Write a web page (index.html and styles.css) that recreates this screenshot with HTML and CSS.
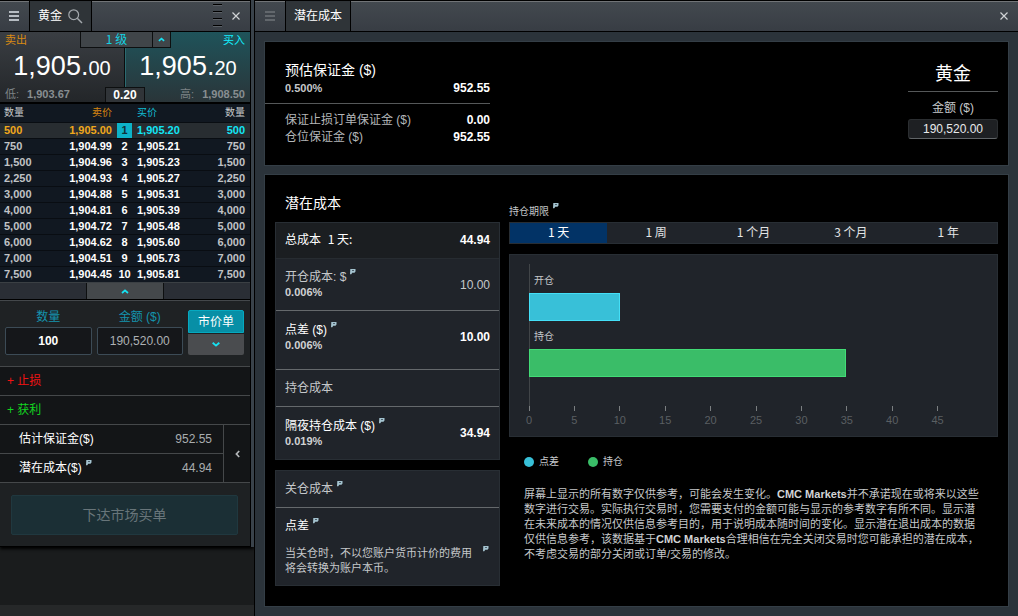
FILE: index.html
```
<!DOCTYPE html>
<html lang="zh-CN">
<head>
<meta charset="utf-8">
<meta name="viewport" content="width=device-width, initial-scale=1">
<title>黄金 - 潜在成本</title>
<link rel="stylesheet" href="styles.css">
</head>
<body>
<svg class="defs" aria-hidden="true">
  <symbol id="menu" viewBox="0 0 10 10"><path d="M0 1h10M0 5h10M0 9h10" stroke="currentColor" stroke-width="2"/></symbol>
  <symbol id="close" viewBox="0 0 8 8"><path d="M.5 .5l7 7M7.500 .5l-7 7" stroke="currentColor" stroke-width="1.200"/></symbol>
  <symbol id="search" viewBox="0 0 15 15"><g fill="none" stroke="currentColor"><circle cx="5.700" cy="5.700" r="4.900" stroke-width="1.200"/><path d="M9.300 9.300l4.700 4.700" stroke-width="1.500"/></g></symbol>
  <symbol id="up" viewBox="0 0 8 5"><path d="M1 4l3-2.600L7 4" fill="none" stroke="currentColor" stroke-width="1.800"/></symbol>
  <symbol id="down" viewBox="0 0 8 5"><path d="M.7 .8l3.300 2.800L7.300 .8" fill="none" stroke="currentColor" stroke-width="1.900"/></symbol>
  <symbol id="left" viewBox="0 0 5 8"><path d="M4.200 1L1.400 4l2.800 3" fill="none" stroke="currentColor" stroke-width="1.700"/></symbol>
  <symbol id="tip" viewBox="0 0 6 6"><path d="M.3 0H5.500V2.600L4.500 3.800H2.200L1.300 5.300H0Z" fill="currentColor"/><path d="M2 1.500h2" stroke="#2a3540" stroke-width=".7"/></symbol>
</svg>
<div class="app">
  <aside class="side">
    <section class="ticket">
      <header class="bar">
        <button class="menu menu-on" aria-label="菜单"><svg><use href="#menu"/></svg></button>
        <button class="tab">黄金<svg class="search"><use href="#search"/></svg></button>
        <span class="grip"><i></i><i></i><i></i><i></i></span>
        <button class="close" aria-label="关闭"><svg><use href="#close"/></svg></button>
      </header>

      <div class="prices">
        <button class="price sell">
          <span class="side-name">卖出</span>
          <span class="quote">1,905.<small>00</small></span>
          <span class="range">低:<b>1,903.67</b></span>
        </button>
        <button class="price buy">
          <span class="side-name">买入</span>
          <span class="quote">1,905.<small>20</small></span>
          <span class="range">高:<b>1,908.50</b></span>
        </button>
        <button class="level"><span>1 级</span><svg class="chev"><use href="#up"/></svg></button>
        <span class="spread">0.20</span>
      </div>

      <table class="ladder">
        <colgroup><col class="c-vol"><col class="c-sell"><col class="c-idx"><col class="c-buy"><col></colgroup>
        <thead><tr><th>数量</th><th class="orange">卖价</th><th></th><th class="cyan">买价</th><th>数量</th></tr></thead>
        <tbody>
          <tr class="top"><td>500</td><td>1,905.00</td><td>1</td><td>1,905.20</td><td>500</td></tr>
          <tr><td>750</td><td>1,904.99</td><td>2</td><td>1,905.21</td><td>750</td></tr>
          <tr><td>1,500</td><td>1,904.96</td><td>3</td><td>1,905.23</td><td>1,500</td></tr>
          <tr><td>2,250</td><td>1,904.93</td><td>4</td><td>1,905.27</td><td>2,250</td></tr>
          <tr><td>3,000</td><td>1,904.88</td><td>5</td><td>1,905.31</td><td>3,000</td></tr>
          <tr><td>4,000</td><td>1,904.81</td><td>6</td><td>1,905.39</td><td>4,000</td></tr>
          <tr><td>5,000</td><td>1,904.72</td><td>7</td><td>1,905.48</td><td>5,000</td></tr>
          <tr><td>6,000</td><td>1,904.62</td><td>8</td><td>1,905.60</td><td>6,000</td></tr>
          <tr><td>7,000</td><td>1,904.51</td><td>9</td><td>1,905.73</td><td>7,000</td></tr>
          <tr><td>7,500</td><td>1,904.45</td><td>10</td><td>1,905.81</td><td>7,500</td></tr>
        </tbody>
      </table>
      <div class="fold"><button aria-label="收起"><svg class="chev"><use href="#up"/></svg></button></div>

      <form class="order">
        <div class="field"><label for="qty">数量</label><input id="qty" class="strong" value="100"></div>
        <div class="field"><label for="amt">金额 ($)</label><input id="amt" value="190,520.00"></div>
        <div class="kind">
          <button type="button" class="market">市价单</button>
          <button type="button" class="more" aria-label="订单类型"><svg class="chev"><use href="#down"/></svg></button>
        </div>
      </form>

      <button class="add stop">+ 止损</button>
      <button class="add profit">+ 获利</button>

      <div class="summary">
        <dl>
          <div><dt>估计保证金($)</dt><dd>952.55</dd></div>
          <div><dt>潜在成本($)<svg class="tip"><use href="#tip"/></svg></dt><dd>44.94</dd></div>
        </dl>
        <button aria-label="展开"><svg><use href="#left"/></svg></button>
      </div>
      <div class="submit"><button>下达市场买单</button></div>
    </section>
    <div class="foot"></div>
  </aside>

  <main class="cost">
    <header class="bar">
      <button class="menu" aria-label="菜单"><svg><use href="#menu"/></svg></button>
      <button class="tab">潜在成本</button>
      <button class="close" aria-label="关闭"><svg><use href="#close"/></svg></button>
    </header>
    <div class="cards">
      <section class="card margin">
        <div class="estimate">
          <div class="est-head">
            <h2>预估保证金 ($)</h2>
            <p><span>0.500%</span><b>952.55</b></p>
          </div>
          <div class="est-rows">
            <p><span>保证止损订单保证金 ($)</span><b>0.00</b></p>
            <p><span>仓位保证金 ($)</span><b>952.55</b></p>
          </div>
        </div>
        <div class="product">
          <h1>黄金</h1>
          <label for="value">金额 ($)</label>
          <input id="value" value="190,520.00">
        </div>
      </section>

      <section class="card detail">
        <div class="breakdown">
          <h2>潜在成本</h2>
          <div class="box">
            <div class="line total"><span class="white">总成本&nbsp; <span class="cjk">1 天:</span></span><b>44.94</b></div>
            <div class="line pair"><div>开仓成本: $<svg class="tip"><use href="#tip"/></svg><small>0.006%</small></div><span>10.00</span></div>
            <div class="line pair tall"><div><span class="white">点差 ($)</span><svg class="tip"><use href="#tip"/></svg><small>0.006%</small></div><b>10.00</b></div>
            <div class="line">持仓成本</div>
            <div class="line pair"><div><span class="white">隔夜持仓成本 ($)</span><svg class="tip"><use href="#tip"/></svg><small>0.019%</small></div><b>34.94</b></div>
          </div>
          <div class="box">
            <div class="line"><span>关仓成本<svg class="tip"><use href="#tip"/></svg></span></div>
            <div class="exit">
              <p class="white">点差<svg class="tip"><use href="#tip"/></svg></p>
              <div class="note"><p>当关仓时，不以您账户货币计价的费用将会转换为账户本币。</p><svg class="tip"><use href="#tip"/></svg></div>
            </div>
          </div>
        </div>

        <div class="period">
          <p class="period-name">持仓期限<svg class="tip"><use href="#tip"/></svg></p>
          <div class="tabs">
            <button class="on">1 天</button><button>1 周</button><button>1 个月</button><button>3 个月</button><button>1 年</button>
          </div>
          <div class="chart">
            <div class="plot">
              <span>开仓</span>
              <div class="value blue" style="width:20%"></div>
              <span>持仓</span>
              <div class="value green" style="width:69.88%"></div>
            </div>
            <div class="axis"><span>0</span><span>5</span><span>10</span><span>15</span><span>20</span><span>25</span><span>30</span><span>35</span><span>40</span><span>45</span></div>
          </div>
          <div class="legend"><span><i class="dot-blue"></i>点差</span><span><i class="dot-green"></i>持仓</span></div>
          <p class="disclaimer">屏幕上显示的所有数字仅供参考，可能会发生变化。<b>CMC Markets</b>并不承诺现在或将来以这些数字进行交易。实际执行交易时，您需要支付的金额可能与显示的参考数字有所不同。显示潜在未来成本的情况仅供信息参考目的，用于说明成本随时间的变化。显示潜在退出成本的数据仅供信息参考，该数据基于<b>CMC Markets</b>合理相信在完全关闭交易时您可能承担的潜在成本，不考虑交易的部分关闭或订单/交易的修改。</p>
        </div>
      </section>
    </div>
  </main>
</div>
</body>
</html>
```
FILE: styles.css
```
* { box-sizing: border-box; }
body {
  margin: 0;
  background: #000;
  color: #c5c8ca;
  font: 12px/16px "Liberation Sans", "Noto Sans CJK SC", sans-serif;
}
h1, h2, p, dl, dd { margin: 0; font-weight: normal; }
button, input { margin: 0; padding: 0; border: 0; background: none; color: inherit; font: inherit; }
button { cursor: pointer; }
svg { display: block; }
b { color: #fff; }
.defs { position: absolute; width: 0; height: 0; }
.cjk { font-family: "Noto Sans CJK SC", sans-serif; }
.white { color: #fff; }
.orange { color: #d68510; }
.cyan { color: #12bcd2; }
.tip { display: inline-block; width: 6px; height: 6px; margin-left: 4px; vertical-align: 6px; color: #a4c3cf; }
.chev { width: 8px; height: 5px; color: #16e3f3; }

.app { display: flex; min-height: 100vh; }
.side { display: flex; flex-direction: column; flex: none; width: 254px; background: #1a1c1d; }
.foot { height: 11px; margin-top: auto; background: #262829; }
.ticket { border-right: 3px solid #3a434b; background: #15171a; box-shadow: inset -1px 0 #000, 0 2px 3px #000; padding-right: 1px; }

/* Window title bars */
.bar {
  display: flex;
  align-items: stretch;
  height: 32px;
  border-top: 1px solid #000;
  border-bottom: 1px solid #000;
  background: linear-gradient(#43494f, #383d44);
  box-shadow: inset 0 1px #717477;
}
.menu { display: grid; place-items: center; width: 30px; padding-right: 2px; border-right: 1px solid #000; color: #62676c; }
.menu svg { width: 10px; height: 10px; }
.menu-on { color: #b6bcc2; }
.tab { display: flex; align-items: center; gap: 6px; padding: 0 8px; border-right: 1px solid #000; background: #2f3438; color: #fff; }
.search { width: 15px; height: 15px; color: #a3a8ac; }
.close { display: grid; place-items: center; width: 28px; margin-left: auto; color: #d0d3d5; }
.close svg { width: 8px; height: 8px; }
.grip { display: flex; flex-direction: column; gap: 6px; width: 9px; margin-left: auto; padding-top: 3px; }
.grip i { height: 1px; background: #000; box-shadow: 0 1px #5b6066; }
.grip + .close { margin-left: 0; }

/* Quotes */
.prices { position: relative; display: grid; grid-template-columns: 1fr 1fr; height: 72px; border-bottom: 2px solid #000; }
.price { display: flex; flex-direction: column; padding: 0 5px; text-align: left; }
.sell { border-right: 1px solid #0a0c0d; background: linear-gradient(#3a3e43, #232629); }
.buy { border-left: 1px solid #2c6a70; background: linear-gradient(#1f535a, #2a3539); text-align: right; }
.side-name { font-size: 11px; color: #d98a12; }
.buy .side-name { color: #12efff; }
.quote { margin: 2px 0; color: #fff; font-size: 27px; line-height: 32px; text-align: center; }
.quote small { font-size: 20px; }
.range { color: #7d8386; font-size: 11px; }
.range b { margin-left: 8px; color: #888e91; }
.level {
  position: absolute; top: 0; left: 80px;
  display: flex; width: 91px; height: 16px;
  border: 1px solid #0d0f10; border-top: 0; background: #404549; color: #12d2e2;
  font: 12px/14px "Noto Sans CJK SC", sans-serif;
}
.level span { flex: 1; }
.level .chev { width: 18px; height: 15px; padding: 5px; border-left: 1px solid #0d0f10; }
.spread {
  position: absolute; bottom: 0; left: 105px;
  width: 40px; height: 15px; border: 1px solid #0d0f10; border-bottom: 0; background: #303438;
  color: #fff; font-weight: bold; line-height: 15px; text-align: center;
}

/* Price ladder */
.ladder { width: 100%; table-layout: fixed; border-spacing: 0; background: #111821; font-size: 11px; }
.c-vol { width: 50px; }
.c-sell { width: 67px; }
.c-idx { width: 15px; }
.c-buy { width: 64px; }
.ladder th { height: 18px; padding: 0; font-size: 10px; font-weight: normal; }
.ladder td { height: 16px; padding: 0; border-top: 1px solid #090d12; line-height: 15px; color: #fff; font-weight: bold; }
.ladder tr > :nth-child(1) { padding-left: 4px; text-align: left; }
.ladder tr > :nth-child(2) { padding-right: 5px; text-align: right; }
.ladder tr > :nth-child(3) { text-align: center; }
.ladder tr > :nth-child(4) { padding-left: 5px; text-align: left; }
.ladder tr > :nth-child(5) { padding-right: 5px; text-align: right; }
.ladder td:first-child, .ladder td:last-child { color: #c0c3c6; }
.ladder .top td { background: #282d31; color: #12e6f6; }
.ladder .top td:nth-child(-n+2) { color: #f0a81c; }
.ladder .top td:nth-child(3) { background: #0db2c8; color: #103038; }
.fold { display: flex; justify-content: center; height: 18px; border-top: 1px solid #3b4044; border-bottom: 1px solid #000; background: #2a2e35; }
.fold button { display: grid; place-items: center; width: 78px; border: solid #0d0f10; border-width: 0 1px; background: #44484b; }

/* Order form */
.order { display: flex; gap: 5px; padding: 8px 6px 11px 5px; border-top: 1px solid #44484b; background: #1f2224; }
.field { display: flex; flex: 1; flex-direction: column; min-width: 0; color: #1493ad; text-align: center; }
.field label { height: 18px; }
.field input { width: 100%; height: 28px; border: 1px solid #3c4b56; border-radius: 2px; background: #15171a; color: #adb1b4; text-align: center; }
.field .strong { color: #fff; font-weight: bold; }
.kind { display: flex; flex-direction: column; gap: 1px; width: 56px; padding-top: 1px; }
.market { height: 23px; border: 1px solid #05a9c0; border-radius: 2px 2px 0 0; background: #078fa6; color: #fff; }
.more { display: grid; place-items: center; height: 21px; border-radius: 0 0 2px 2px; background: #4a4c4f; }
.add { display: block; width: 100%; height: 29px; padding-left: 7px; border-top: 1px solid #45484a; background: #131517; text-align: left; }
.stop { color: #f21212; }
.profit { color: #12d420; }
.summary { display: flex; border: solid #45484a; border-width: 1px 0; background: #131517; }
.summary dl { flex: 1; }
.summary dl div { display: flex; align-items: center; justify-content: space-between; height: 28px; padding: 0 11px 1px 19px; }
.summary dl div + div { height: 29px; border-top: 1px solid #45484a; }
.summary dt { color: #fff; }
.summary dd { color: #a9adaf; }
.summary button { display: grid; place-items: center; width: 27px; border-left: 1px solid #45484a; color: #b4b7ba; }
.summary svg:not(.tip) { width: 5px; height: 8px; }
.submit { padding: 12px 12px 11px 11px; border-bottom: 1px solid #000; background: #1e2123; }
.submit button { width: 100%; height: 40px; border: 1px solid #20383f; border-radius: 2px; background: #1b2f35; color: #68757a; font-size: 14px; }

/* Cost window */
.cost { display: flex; flex: 1; flex-direction: column; min-width: 0; margin-left: 1px; background: #2b333a; }
.cost .bar { flex: none; }
.cost .bar .menu { width: 31px; padding-right: 1px; }
.cards { display: flex; flex: 1; flex-direction: column; gap: 10px; padding: 10px; }
.card { display: flex; background: #000; box-shadow: 0 0 0 1px #343e46; }
.margin { justify-content: space-between; padding: 18px 10px 19px 0; }
.estimate { width: 225px; }
.estimate p { display: flex; justify-content: space-between; }
h2 { color: #fff; font-size: 14px; line-height: 20px; }
.est-head { padding: 0 0 7px 20px; border-bottom: 1px solid #555859; }
.est-head p span { font-size: 11px; font-weight: bold; }
.est-rows { padding: 8px 0 0 20px; }
.est-rows p { height: 17px; }
.est-rows p span { color: #b4b7b9; }
.product { display: flex; flex-direction: column; width: 90px; text-align: center; }
.product h1 { padding: 1px 0 4px; border-bottom: 1px solid #555859; color: #fff; font-size: 18px; line-height: 26px; }
.product label { margin: 8px 0 3px; }
.product input { width: 100%; height: 20px; border: 1px solid #2b2e31; border-bottom-color: #606467; border-radius: 3px; background: #1e2023; color: #e8eaeb; text-align: center; }
.detail { flex: 1; gap: 9px; padding: 0 10px 9px; }
.breakdown { flex: none; width: 225px; }
.breakdown h2 { padding: 18px 10px 9px; }
.box { margin-bottom: 10px; border: 1px solid #282e34; background: #20242a; }
.line { display: flex; align-items: center; justify-content: space-between; height: 37px; padding: 0 9px; }
.line + .line { border-top: 1px solid #65696c; }
.line.total { height: 35px; padding-bottom: 2px; background: #1b1e21; }
.line.total + .line { border-top-color: #272c31; }
.line.pair { height: 52px; }
.line.pair:last-child { height: 53px; }
.line.tall { height: 59px; padding-bottom: 6px; }
.line small { display: block; color: #d0d2d4; font-size: 11px; font-weight: bold; line-height: 15px; }
.box + .box .line { height: 36px; }
.exit { padding: 10px 9px 9px; border-top: 1px solid #65696c; }
.note { display: flex; justify-content: space-between; margin-top: 12px; font-size: 11px; line-height: 15px; }
.note p { width: 188px; }
.note .tip { margin-right: 1px; }
.period { flex: 1; min-width: 0; }
.period-name { padding: 28px 0 2px; font-size: 10px; }
.tabs { display: grid; grid-template-columns: repeat(5, 1fr); height: 22px; border: 1px solid #282e34; background: #20242a; }
.tabs button { padding-bottom: 2px; color: #e3e5e6; font: 12px/18px "Noto Sans CJK SC", sans-serif; }
.tabs .on { background: #023366; color: #fff; }
.chart { margin-top: 10px; padding: 9px 14px 6px 19px; border: 1px solid #282e34; background: #20242a; }
.plot { height: 142px; padding-top: 9px; background: linear-gradient(#414548, #414548) 0 0 / 1px 100% no-repeat; }
.plot span { display: block; height: 16px; margin-bottom: 4px; padding-left: 5px; font-size: 10px; }
.value { height: 28px; margin-bottom: 8px; border: 1px solid; }
.blue { border-color: #44dff7; background: #38c0d8; }
.green { border-color: #42dc76; background: #3abd68; }
.axis { display: grid; grid-template-columns: repeat(10, 1fr); color: #5a5f62; font-size: 11px; }
.axis span { width: 24px; margin-left: -12px; padding-top: 4px; background: linear-gradient(#7b7f81, #7b7f81) 50% 0 / 1px 5px no-repeat; line-height: 20px; text-align: center; }
.legend { display: flex; gap: 29px; padding: 17px 15px; font-size: 10px; }
.legend span { display: flex; align-items: center; gap: 5px; }
.legend i { width: 10px; height: 10px; border-radius: 50%; }
.dot-blue { background: #38c0d8; }
.dot-green { background: #3abd68; }
.disclaimer { padding: 0 16px 0 15px; font-size: 11px; line-height: 15px; }
.disclaimer b { color: #d2d4d6; }
```
